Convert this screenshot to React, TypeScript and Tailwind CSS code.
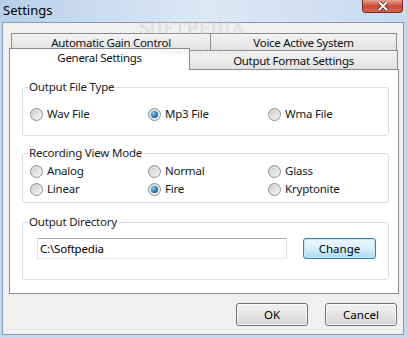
import { useState } from 'react';

const font = { fontFamily: '"Noto Sans", "Open Sans", Arial, sans-serif' };

function Radio({ label, checked, onPick }: { label: string; checked: boolean; onPick: () => void }) {
  return (
    <label className="flex items-center gap-[4px] h-[18px] cursor-default" onClick={onPick}>
      <span className="w-[13px] h-[13px] rounded-full border border-[#8e8f8f] bg-gradient-to-br from-[#d4d4d4] to-[#f6f6f6] flex items-center justify-center">
        {checked ? (
          <span className="w-[7px] h-[7px] rounded-full bg-[radial-gradient(circle_at_35%_35%,#7fd0ff,#1a6fb5_60%,#0d3d70)]" />
        ) : (
          <span className="w-[9px] h-[9px] rounded-full bg-gradient-to-br from-[#cfcfcf] to-[#f4f4f4]" />
        )}
      </span>
      <span className="text-[11.5px] tracking-[-0.2px] text-[#101820]">{label}</span>
    </label>
  );
}

function Group({ title, className, children }: { title: string; className: string; children: React.ReactNode }) {
  return (
    <fieldset className={`border border-[#d5dfe5] rounded-[3px] ${className}`}>
      <legend className="ml-[5px] px-[1px] text-[11.5px] tracking-[-0.2px] leading-[14px] text-[#1b1b1b]">{title}</legend>
      {children}
    </fieldset>
  );
}

export default function App() {
  const [fileType, setFileType] = useState('Mp3 File');
  const [view, setView] = useState('Fire');

  const tabText = 'text-[11.5px] tracking-[-0.3px] text-center text-[#111]';

  return (
    <div style={font} className="w-[407px] h-[338px] bg-[#c3d7ee] flex flex-col overflow-hidden">
      {/* title bar */}
      <div className="relative z-20 h-[22px] flex items-start bg-gradient-to-r from-[#b8d0eb] via-[#dce8f5] to-[#c7daef]">
        <span className="ml-[3px] mt-[2px] text-[13px] leading-[16px] text-black">Settings</span>
        <span className="absolute left-[140px] top-[19px] text-[19px] leading-[19px] font-bold tracking-[1px] text-[#c8c8c8]/40 font-serif pointer-events-none">SOFTPEDIA</span>
        <span className="absolute left-[160px] top-[46px] text-[9px] leading-[9px] text-[#c8c8c8]/40 pointer-events-none">www.softpedia.com</span>
        <div className="ml-auto mr-[4px] w-[41px] h-[13px] rounded-b-[4px] border border-t-0 border-[#7a2a1c] bg-gradient-to-b from-[#e8a293] via-[#c94a32] to-[#d2694f] flex items-center justify-center">
          <svg width="12" height="10" viewBox="0 0 12 10">
            <path d="M2 1 L10 9 M10 1 L2 9" stroke="#5a1b10" strokeWidth="3.4" />
            <path d="M2 1 L10 9 M10 1 L2 9" stroke="#fff" strokeWidth="2" />
          </svg>
        </div>
      </div>

      {/* client area */}
      <div className="ml-[2px] mr-[3px] h-[313px] border border-[#8a9bb3] bg-[#f0f0f0] flex flex-col">
        <div className="ml-[6px] mt-[10px] w-[390px] flex flex-col">
          {/* back row of tabs */}
          <div className="flex pl-[2px]">
            <div className={`w-[200px] h-[18px] border border-b-0 border-[#898c95] bg-gradient-to-b from-[#f3f3f3] to-[#e2e2e2] leading-[17px] ${tabText}`}>
              Automatic Gain Control
            </div>
            <div className={`w-[186px] h-[18px] border border-l-0 border-b-0 border-[#898c95] bg-gradient-to-b from-[#f3f3f3] to-[#e2e2e2] leading-[17px] ${tabText}`}>
              Voice Active System
            </div>
          </div>
          {/* front row of tabs */}
          <div className="flex items-end -mt-[3px]">
            <div className={`relative z-10 w-[181px] h-[22px] -mb-[1px] border border-b-0 border-[#898c95] bg-white leading-[18px] ${tabText}`}>
              General Settings
            </div>
            <div className={`w-[208px] h-[19px] border border-l-0 border-b-0 border-[#898c95] bg-gradient-to-b from-[#f3f3f3] to-[#e2e2e2] leading-[19px] ${tabText}`}>
              Output Format Settings
            </div>
          </div>
          {/* panel */}
          <div className="h-[225px] border border-[#898c95] bg-white pl-[12px] pr-[9px] pt-[10px] flex flex-col">
            <Group title="Output File Type" className="h-[56px] pb-[8px]">
              <div className="grid grid-cols-[118px_120px_1fr] pl-[7px] mt-[11px]">
                {['Wav File', 'Mp3 File', 'Wma File'].map((t) => (
                  <Radio key={t} label={t} checked={fileType === t} onPick={() => setFileType(t)} />
                ))}
              </div>
            </Group>
            <Group title="Recording View Mode" className="mt-[10px] h-[57px]">
              <div className="grid grid-cols-[118px_120px_1fr] pl-[7px] mt-[2px]">
                {['Analog', 'Normal', 'Glass', 'Linear', 'Fire', 'Kryptonite'].map((t) => (
                  <Radio key={t} label={t} checked={view === t} onPick={() => setView(t)} />
                ))}
              </div>
            </Group>
            <Group title="Output Directory" className="mt-[12px] h-[65px]">
              <div className="flex items-center pl-[14px] mt-[9px]">
                <div className="w-[250px] h-[21px] border border-[#abadb3] border-l-[#e2e3ea] border-r-[#dbdfe6] border-b-[#e3e9ef] bg-white text-[11.5px] tracking-[-0.2px] leading-[19px] pl-[2px] text-black">
                  C:\Softpedia
                </div>
                <button className="ml-[16px] w-[73px] h-[21px] rounded-[3px] border border-[#3c7fb1] bg-gradient-to-b from-[#eaf6fd] via-[#d9f0fc] to-[#a7d9f5] text-[11.5px] text-black shadow-[inset_0_0_0_1px_#c4e5f6]">
                  Change
                </button>
              </div>
            </Group>
          </div>
        </div>
        {/* buttons */}
        <div className="flex justify-end gap-[17px] mr-[6px] mt-[9px]">
          {['OK', 'Cancel'].map((t) => (
            <button
              key={t}
              className="w-[72px] h-[23px] rounded-[3px] border border-[#707070] bg-gradient-to-b from-[#f2f2f2] via-[#e6e6e6] to-[#d0d0d0] text-[11.5px] text-black shadow-[inset_0_0_0_1px_#fcfcfc]"
            >
              {t}
            </button>
          ))}
        </div>
      </div>
    </div>
  );
}
